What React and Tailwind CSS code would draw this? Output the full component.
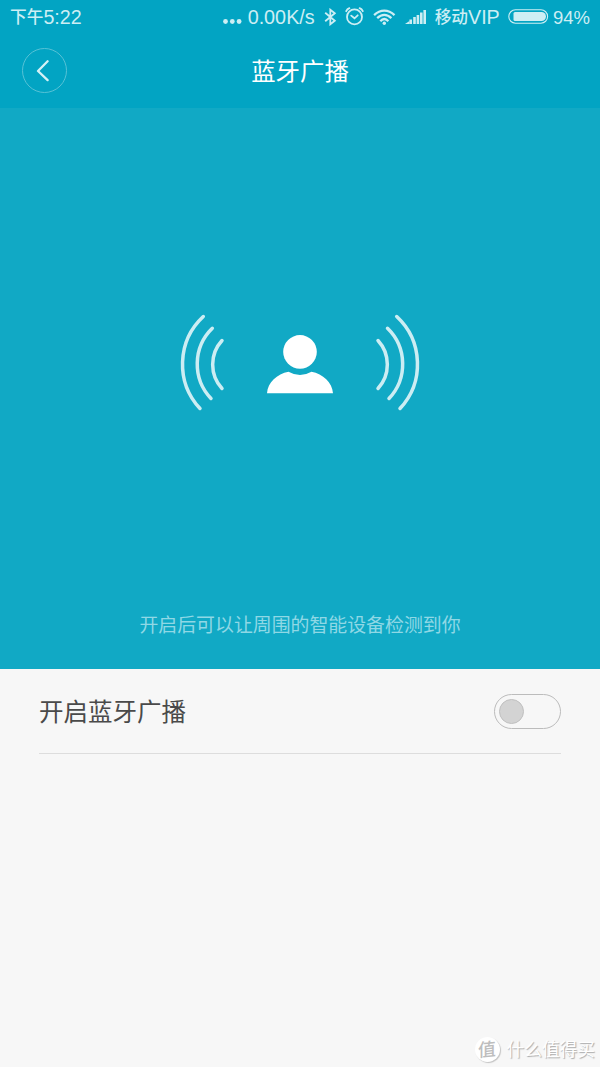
import { useState } from "react";

const signalBars = [
  { x: 0, h: 3 },
  { x: 4.2, h: 4.5 },
  { x: 8, h: 7 },
  { x: 11.4, h: 9 },
  { x: 14.8, h: 11.5 },
  { x: 18.2, h: 14 },
];

const waves = [
  "M203.3 316.5A65 65 0 0 0 200 408.5",
  "M212.3 328.3A50 50 0 0 0 211 398.5",
  "M222 340.5A35.5 35.5 0 0 0 222 388.5",
  "M378 340.5A35.5 35.5 0 0 1 378 388.5",
  "M387.5 328.3A50 50 0 0 1 389 398.5",
  "M396.7 316.5A65 65 0 0 1 400 408.5",
];

function StatusBar() {
  return (
    <div className="flex h-[34px] items-center pr-[10px] pl-[10px] text-[19.7px] leading-none whitespace-nowrap text-[#cdeef4]">
      <div className="flex items-center pt-[2px]">
        <span className="text-[16.7px] font-medium">下午</span>
        <span>5:22</span>
      </div>
      <div className="ml-auto flex items-center">
        <svg className="mt-[10px] h-[5px] w-[19px]" viewBox="0 0 19 5" fill="currentColor">
          <circle cx="2.5" cy="2.5" r="2.4" />
          <circle cx="9.3" cy="2.5" r="2.4" />
          <circle cx="16.1" cy="2.5" r="2.4" />
        </svg>
        <span className="ml-[6px] w-[68px] pt-[2px] text-[19.8px]">0.00K/s</span>
        {/* bluetooth */}
        <svg className="ml-[8px] h-[18px] w-[13px]" viewBox="0 0 13 18" fill="none" stroke="currentColor" strokeWidth="1.8">
          <path d="M1.2 4.8 10.8 12.8 6.3 16.3V1.7L10.8 5.2 1.2 13.2" />
        </svg>
        {/* alarm */}
        <svg className="ml-[8px] h-[19px] w-[19px]" viewBox="0 0 19 19" fill="none" stroke="currentColor" strokeWidth="1.8" strokeLinecap="round">
          <circle cx="9.5" cy="9.9" r="7.5" />
          <path d="M1.2 4.2Q2.2 2 4.4 1.2M17.8 4.2Q16.8 2 14.6 1.2M6.2 8.6l3.3 2.7 3.2-3" />
        </svg>
        {/* wifi */}
        <svg className="mt-px ml-[9px] h-[17px] w-[23px]" viewBox="0 0 23 17" fill="none" stroke="currentColor" strokeWidth="2.3">
          <path d="M1.1 6.1Q5.8 1.7 11.3 1.7T21.5 6.1M4.2 9.2Q7.6 5.9 11.3 5.9T18.4 9.2M7.3 12.2Q9.2 10 11.3 10T15.3 12.2" />
          <circle cx="11.3" cy="14.3" r="1.7" fill="currentColor" stroke="none" />
        </svg>
        {/* signal */}
        <svg className="ml-[9px] h-[14px] w-[21px]" viewBox="0 0 21 14" fill="currentColor">
          {signalBars.map((bar, i) =>
            i === 0 ? (
              <path key={bar.x} d="M0 14 4.5 11v3z" />
            ) : (
              <rect key={bar.x} x={bar.x + 0.2} y={14 - bar.h} width="2.6" height={bar.h} />
            )
          )}
        </svg>
        <span className="ml-[9px] pt-[2px] text-[16.7px] font-medium">移动</span>
        <span className="w-[31px] pt-[2px] text-[19.7px]">VIP</span>
        {/* battery */}
        <svg className="ml-[9px] h-[15px] w-[41px]" viewBox="0 0 41 15">
          <rect x="0.8" y="0.8" width="38.8" height="13.4" rx="6.7" fill="none" stroke="currentColor" strokeWidth="1.1" />
          <path d="M7 3H33.5A4.5 4.5 0 0 1 33.5 12H7Q5.5 12 5.5 10.5V4.5Q5.5 3 7 3Z" fill="currentColor" />
        </svg>
        <span className="ml-[4px] w-[37px] pt-[2px] text-[18.5px]">94%</span>
      </div>
    </div>
  );
}

function Header() {
  return (
    <header className="h-[108px] bg-[#02a4c3]">
      <StatusBar />
      <div className="grid h-[73px] grid-cols-[44px_1fr_44px] items-center px-[22px]">
        <button className="flex h-[45px] w-[45px] items-center justify-center rounded-full border border-[#57c2d6]" aria-label="返回">
          <svg className="-ml-1 h-[22px] w-[14px]" viewBox="0 0 14 22" fill="none" stroke="#d5f1f6" strokeWidth="2.3" strokeLinecap="round" strokeLinejoin="round">
            <path d="M11.6 1.3 2 11 11.6 20.1" />
          </svg>
        </button>
        <h1 className="pt-[4px] text-center text-[24.4px] leading-none text-white">蓝牙广播</h1>
      </div>
    </header>
  );
}

function Broadcast() {
  return (
    <section className="flex h-[561px] flex-col items-center bg-[#11a9c5] pt-[192px]">
      <svg className="h-[125px] w-[260px] shrink-0" viewBox="170 300 260 125" fill="none">
        <g stroke="#ccedf3" strokeWidth="3.5" strokeLinecap="round">
          {waves.map((d) => (
            <path key={d} d={d} />
          ))}
        </g>
        <circle cx="300" cy="351.9" r="16.8" fill="#fff" />
        <path fill="#fff" d="M267 393.2C267.8 382.5 277 374 288.5 371.8Q294 375 300 375T311.5 371.8C323 374 332.2 382.5 333 393.2Z" />
      </svg>
      <p className="mt-[191px] text-[18.9px] leading-[20px] text-[#8fd8e5]">开启后可以让周围的智能设备检测到你</p>
    </section>
  );
}

function Watermark() {
  return (
    <div className="mt-auto flex items-center justify-end pr-[5px] pb-[5px]">
      <span className="flex h-[25px] w-[25px] items-center justify-center rounded-full bg-white text-[18px] leading-none text-[#bdbdbd] shadow-[1px_1px_1px_#c4c4c4]">
        <span className="-rotate-6 -skew-x-6 font-medium">值</span>
      </span>
      <span className="ml-[7px] pt-px text-[17.7px] leading-[24px] text-white [text-shadow:1px_1px_1px_#aaaaaa]">什么值得买</span>
    </div>
  );
}

export default function App() {
  const [enabled, setEnabled] = useState(false);

  return (
    <div className="flex h-[1067px] w-[600px] flex-col overflow-hidden bg-[#f7f7f7] font-['Liberation_Sans','Noto_Sans_CJK_SC',sans-serif]">
      <Header />
      <Broadcast />
      <div className="mx-[39px] flex h-[85px] items-center justify-between border-b border-[#dddddd]">
        <span className="pt-[5px] text-[24.5px] leading-none text-[#4a4a4a]">开启蓝牙广播</span>
        <button
          role="switch"
          aria-checked={enabled}
          aria-label="开启蓝牙广播"
          onClick={() => setEnabled(!enabled)}
          className={`flex h-[35px] w-[67px] items-center rounded-full border border-[#bcbcbc] px-[4px] ${enabled ? "justify-end" : "justify-start"}`}
        >
          <span className="h-[25px] w-[25px] rounded-full border border-[#c0c0c0] bg-[#d3d3d3]" />
        </button>
      </div>
      <Watermark />
    </div>
  );
}
